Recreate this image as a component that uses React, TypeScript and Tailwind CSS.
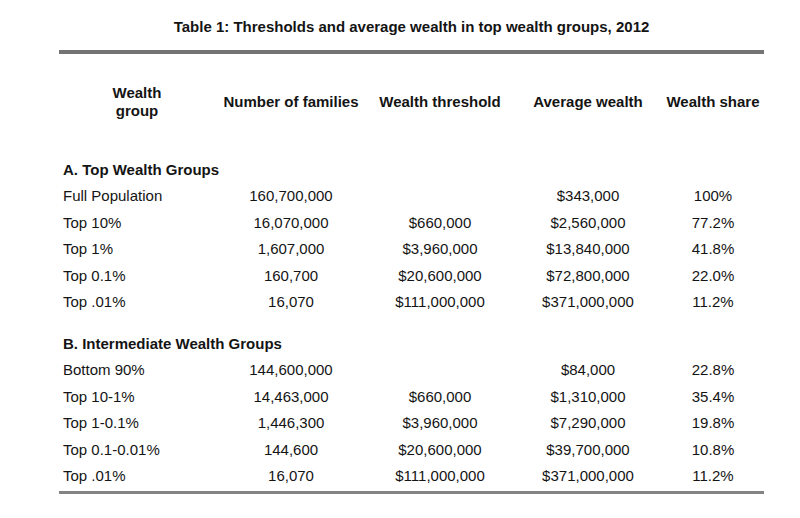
const font = { fontFamily: '"Liberation Sans", Arial, sans-serif' };

type Row = [string, string, string, string, string];

const topGroups: Row[] = [
  ['Full Population', '160,700,000', '', '$343,000', '100%'],
  ['Top 10%', '16,070,000', '$660,000', '$2,560,000', '77.2%'],
  ['Top 1%', '1,607,000', '$3,960,000', '$13,840,000', '41.8%'],
  ['Top 0.1%', '160,700', '$20,600,000', '$72,800,000', '22.0%'],
  ['Top .01%', '16,070', '$111,000,000', '$371,000,000', '11.2%'],
];

const midGroups: Row[] = [
  ['Bottom 90%', '144,600,000', '', '$84,000', '22.8%'],
  ['Top 10-1%', '14,463,000', '$660,000', '$1,310,000', '35.4%'],
  ['Top 1-0.1%', '1,446,300', '$3,960,000', '$7,290,000', '19.8%'],
  ['Top 0.1-0.01%', '144,600', '$20,600,000', '$39,700,000', '10.8%'],
  ['Top .01%', '16,070', '$111,000,000', '$371,000,000', '11.2%'],
];

const cols = 'grid grid-cols-[156px_152px_146px_150px_100px] items-center';

const DataRow = ({ row }: { row: Row }) => (
  <div className={`${cols} h-[26.6px]`}>
    <span className="pl-1">{row[0]}</span>
    <span className="text-center">{row[1]}</span>
    <span className="text-center">{row[2]}</span>
    <span className="text-center">{row[3]}</span>
    <span className="text-center">{row[4]}</span>
  </div>
);

export default function App() {
  return (
    <div className="w-[800px] h-[518px] bg-white text-[#141414] text-[15px] overflow-hidden" style={font}>
      <div className="ml-[59px] w-[705px] pt-[18px]">
        <h1 className="text-center font-bold leading-[18px]">
          Table 1: Thresholds and average wealth in top wealth groups, 2012
        </h1>
        <div className="mt-[14px] h-[4px] bg-[#747474]" />

        <div className={`${cols} mt-[30px] font-bold leading-[18px]`}>
          <span className="text-center">
            Wealth
            <br />
            group
          </span>
          <span className="text-center">Number of families</span>
          <span className="text-center">Wealth threshold</span>
          <span className="text-center">Average wealth</span>
          <span className="text-center">Wealth share</span>
        </div>

        <div className="mt-[37px]">
          <div className="h-[26px] flex items-center pl-1 font-bold">A. Top Wealth Groups</div>
          {topGroups.map((r) => (
            <DataRow key={r[0]} row={r} />
          ))}
        </div>

        <div className="mt-[15px]">
          <div className="h-[26px] flex items-center pl-1 font-bold">B. Intermediate Wealth Groups</div>
          {midGroups.map((r, i) => (
            <DataRow key={i} row={r} />
          ))}
        </div>
        <div className="mt-[1px] h-[3px] bg-[#848484]" />
      </div>
    </div>
  );
}
